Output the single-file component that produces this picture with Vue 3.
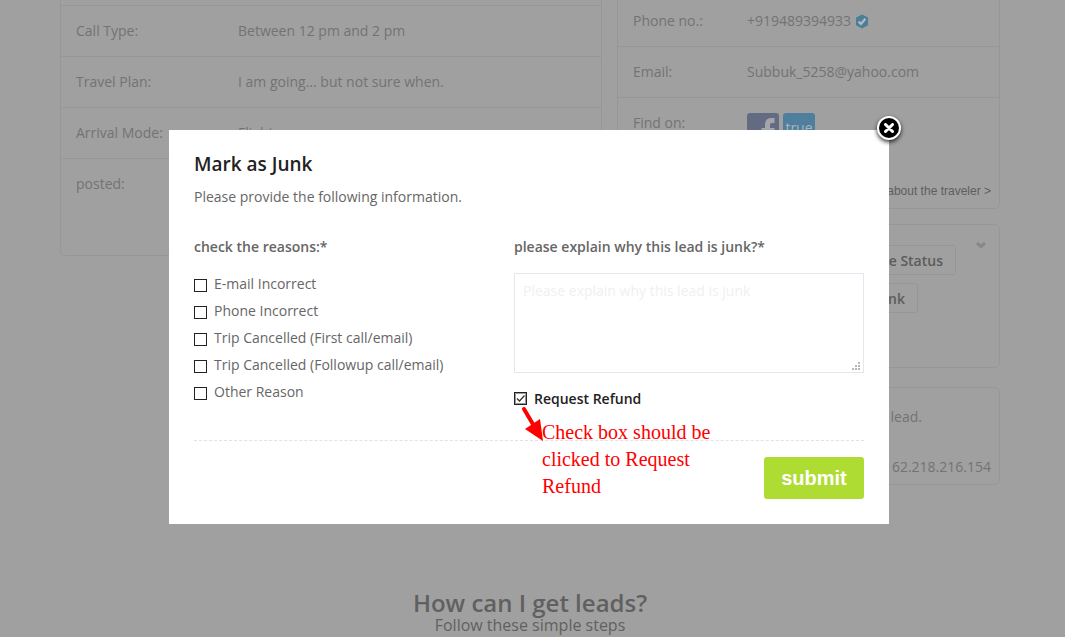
<script setup>
import { ref } from 'vue'

const tripRows = [
  { label: 'Call Type:', value: 'Between 12 pm and 2 pm' },
  { label: 'Travel Plan:', value: 'I am going... but not sure when.' },
  { label: 'Arrival Mode:', value: 'Flight' },
  { label: 'posted:', value: '' }
]

const reasons = ref([
  { id: 'email', label: 'E-mail Incorrect', checked: false },
  { id: 'phone', label: 'Phone Incorrect', checked: false },
  { id: 'first', label: 'Trip Cancelled (First call/email)', checked: false },
  { id: 'followup', label: 'Trip Cancelled (Followup call/email)', checked: false },
  { id: 'other', label: 'Other Reason', checked: false }
])

const explanation = ref('')
const refund = ref(true)
</script>

<template>
  <div class="screen">
    <main class="page">
      <div class="columns">
        <dl class="card trip">
          <div v-for="row in tripRows" :key="row.label" class="row">
            <dt>{{ row.label }}</dt>
            <dd>{{ row.value }}</dd>
          </div>
        </dl>

        <div class="side">
          <section class="card contact">
            <dl>
              <div class="row">
                <dt>Phone no.:</dt>
                <dd class="phone">
                  +919489394933
                  <svg width="14" height="15" viewBox="0 0 14 15" aria-hidden="true">
                    <path d="M7 0.5 13 3.6V11.2L7 14.5 1 11.2V3.6Z" fill="#4d7d99" />
                    <path d="M3.6 7.6 6 10 10.4 4.8" fill="none" stroke="#b4bcc1" stroke-width="2.2" />
                  </svg>
                </dd>
              </div>
              <div class="row">
                <dt>Email:</dt>
                <dd>Subbuk_5258@yahoo.com</dd>
              </div>
              <div class="row">
                <dt>Find on:</dt>
                <dd class="networks">
                  <svg width="32" height="32" viewBox="0 0 32 32" aria-label="Facebook">
                    <rect width="32" height="32" rx="3" fill="#636b82" />
                    <path d="M18 32V20H14.5V15H18V12Q18 5 24 5H27.500V10H25Q23 10 23 12V15H27.500V20H23V32Z" fill="#a3a5aa" />
                  </svg>
                  <span class="truecaller">true</span>
                </dd>
              </div>
            </dl>
            <a class="more" href="#">Know more about the traveler &gt;</a>
          </section>

          <section class="card actions">
            <div class="buttons">
              <button type="button">Change Status</button>
              <button type="button" class="short">Mark as Junk</button>
            </div>
            <svg class="chevron" width="10" height="8" viewBox="0 0 10 8" aria-hidden="true">
              <path d="M1 2 5 5.500 9 2" fill="none" stroke="#888" stroke-width="3" />
            </svg>
          </section>

          <section class="card notes">
            <p class="lead">lead.</p>
            <p>62.218.216.154</p>
          </section>
        </div>
      </div>

      <header class="steps">
        <h2>How can I get leads?</h2>
        <p>Follow these simple steps</p>
      </header>
    </main>

    <div class="overlay">
      <form class="modal" role="dialog" aria-labelledby="junk-title" @submit.prevent>
        <button type="button" class="close" aria-label="Close">
          <svg width="10" height="10" viewBox="0 0 10 10" aria-hidden="true">
            <path d="M1.500 1.500 8.500 8.500M8.500 1.500 1.500 8.500" stroke="#fff" stroke-width="3" stroke-linecap="round" />
          </svg>
        </button>

        <h1 id="junk-title">Mark as Junk</h1>
        <p class="intro">Please provide the following information.</p>

        <div class="fields">
          <fieldset>
            <legend>check the reasons:*</legend>
            <label v-for="reason in reasons" :key="reason.id" class="check">
              <input v-model="reason.checked" type="checkbox" />
              <span>{{ reason.label }}</span>
            </label>
          </fieldset>

          <div class="explain">
            <label class="heading" for="explanation">please explain why this lead is junk?*</label>
            <div class="textbox">
              <textarea id="explanation" v-model="explanation" placeholder="Please explain why this lead is junk"></textarea>
              <svg class="grip" width="8" height="8" viewBox="0 0 8 8" aria-hidden="true">
                <path d="M6 0h2v2H6zM3 3h2v2H3zM6 3h2v2H6zM0 6h2v2H0zM3 6h2v2H3zM6 6h2v2H6z" fill="#b8b8b8" />
              </svg>
            </div>
            <label class="check refund">
              <input v-model="refund" type="checkbox" />
              <svg v-if="refund" class="tick" width="13" height="13" viewBox="0 0 13 13" aria-hidden="true">
                <rect x="1.500" y="1.500" width="10" height="10" fill="none" stroke="#333" stroke-dasharray="1 1" />
                <path d="M3 6.500 5.500 9 10.500 3.500" fill="none" stroke="#333" stroke-width="1.300" />
              </svg>
              <span>Request Refund</span>
            </label>
          </div>
        </div>

        <footer>
          <button type="submit" class="submit">submit</button>
        </footer>

        <div class="callout">
          <svg width="24" height="36" viewBox="0 0 24 36" aria-hidden="true">
            <path d="M4 4 14 21" stroke="#f00" stroke-width="4" stroke-linecap="round" />
            <path d="M23 36 5 24 20 14Z" fill="#f00" />
          </svg>
          <p>Check box should be clicked to Request Refund</p>
        </div>
      </form>
    </div>
  </div>
</template>

<style>
html,
body {
  background: #a0a0a0;
}
</style>

<style scoped>
.screen {
  position: relative;
  overflow: hidden;
  min-height: 100vh;
  font: 14px/20px "Open Sans", "Noto Sans", sans-serif;
  color: #737373;
}

.screen *,
.screen *::before {
  box-sizing: border-box;
}

p,
h1,
h2,
dl,
dd {
  margin: 0;
}

button,
textarea {
  font: inherit;
}

.page {
  padding-right: 5px;
}

.columns {
  display: flex;
  align-items: flex-start;
  gap: 15px;
  max-width: 940px;
  margin: 0 auto;
}

.card {
  border: 1px solid #979797;
  border-radius: 5px;
}

.trip {
  flex: 1;
  min-height: 256px;
  padding-top: 5px;
  border-top: 0;
  border-radius: 0 0 5px 5px;
}

.row {
  display: flex;
  padding: 15px;
  border-top: 1px solid #979797;
}

.row dt {
  flex: none;
  width: 162px;
}

.side {
  width: 383px;
}

.contact {
  display: flex;
  flex-direction: column;
  justify-content: space-between;
  min-height: 209px;
  border-top: 0;
  border-radius: 0 0 5px 5px;
}

.contact .row dt {
  width: 114px;
}

.contact .row:first-child {
  padding-top: 11px;
  border-top: 0;
}

.phone {
  display: flex;
  align-items: center;
  gap: 4px;
}

.networks {
  display: flex;
  gap: 4px;
}

.truecaller {
  width: 32px;
  height: 32px;
  border-radius: 3px;
  background: #4f7f9c;
  color: #a9b5bc;
  line-height: 29px;
  text-align: center;
}

.more {
  display: block;
  padding: 0 8px 7px;
  color: #5e5e5e;
  font: 12px/20px "Liberation Sans", Arial, sans-serif;
  text-align: right;
  text-decoration: none;
}

.actions {
  display: flex;
  justify-content: space-between;
  min-height: 144px;
  margin-top: 15px;
  padding: 20px 13px 20px 15px;
}

.buttons {
  display: flex;
  flex-direction: column;
  align-items: flex-end;
  gap: 8px;
  width: 323px;
}

.buttons button {
  height: 30px;
  padding: 1px 12px 0;
  border: 1px solid #969696;
  border-radius: 3px;
  background: transparent;
  color: #5c5c5c;
  font-weight: 600;
}

.buttons .short {
  margin-right: 38px;
}

.chevron {
  margin-top: -4px;
}

.notes {
  min-height: 98px;
  margin-top: 19px;
  padding: 19px 8px 7px;
  text-align: right;
}

.notes .lead {
  margin-bottom: 30px;
  padding-right: 69px;
}

.steps {
  margin-top: 103px;
  color: #606060;
  text-align: center;
}

.steps h2 {
  font-size: 24px;
  font-weight: 600;
  line-height: 30px;
}

.steps p {
  font-size: 16px;
  line-height: 14px;
}

.overlay {
  position: absolute;
  inset: 0;
  padding: 130px 7px 0 0;
}

.modal {
  position: relative;
  max-width: 720px;
  margin: 0 auto;
  padding: 20px 25px 25px;
  background: #fff;
  color: #666;
}

.close {
  position: absolute;
  top: -14px;
  right: -12px;
  display: flex;
  align-items: center;
  justify-content: center;
  width: 24px;
  height: 24px;
  padding: 0;
  border: 2px solid #fff;
  border-radius: 50%;
  background: #000;
  box-shadow: 0 2px 4px rgba(0, 0, 0, 0.8);
}

h1 {
  color: #222;
  font-size: 19px;
  font-weight: 600;
  line-height: 28px;
}

.intro {
  margin-top: 9px;
}

.fields {
  display: grid;
  grid-template-columns: 320px 1fr;
  margin-top: 30px;
  padding-bottom: 28px;
  border-bottom: 1px dashed #e2e2e6;
}

fieldset {
  min-width: 0;
  margin: 0;
  padding: 0;
  border: 0;
}

legend,
.heading {
  display: block;
  margin-bottom: 16px;
  padding: 0;
  font-weight: 600;
}

legend {
  margin-bottom: 13px;
}

.check {
  position: relative;
  display: flex;
  align-items: center;
  gap: 7px;
  height: 27px;
}

.check input {
  appearance: none;
  width: 13px;
  height: 13px;
  margin: 3px 0 0;
  border: 1px solid #222;
  background: #fff;
}

.textbox {
  position: relative;
  display: flex;
}

textarea {
  width: 100%;
  height: 100px;
  padding: 7px 8px;
  border: 1px solid #e6e6ef;
  background: #fff;
  resize: none;
}

textarea::placeholder {
  color: #f0f0f0;
  opacity: 1;
}

.grip {
  position: absolute;
  right: 4px;
  bottom: 3px;
}

.refund {
  margin-top: 12px;
  color: #222;
  font-weight: 600;
}

.refund input {
  margin-top: 0;
}

.tick {
  position: absolute;
  left: 0;
  top: 7px;
}

footer {
  display: flex;
  justify-content: flex-end;
  padding-top: 16px;
}

.submit {
  width: 100px;
  height: 42px;
  padding: 0;
  border: 0;
  border-radius: 3px;
  background: #aedc33;
  color: #fff;
  font: bold 20px/24px "Liberation Sans", Arial, sans-serif;
}

.callout {
  position: absolute;
  top: 275px;
  left: 351px;
  display: flex;
  color: #f00;
  font: 20px/27px "Liberation Serif", "Times New Roman", serif;
}

.callout svg {
  flex: none;
}

.callout p {
  width: 180px;
  margin-top: 14px;
  margin-left: -2px;
}
</style>
